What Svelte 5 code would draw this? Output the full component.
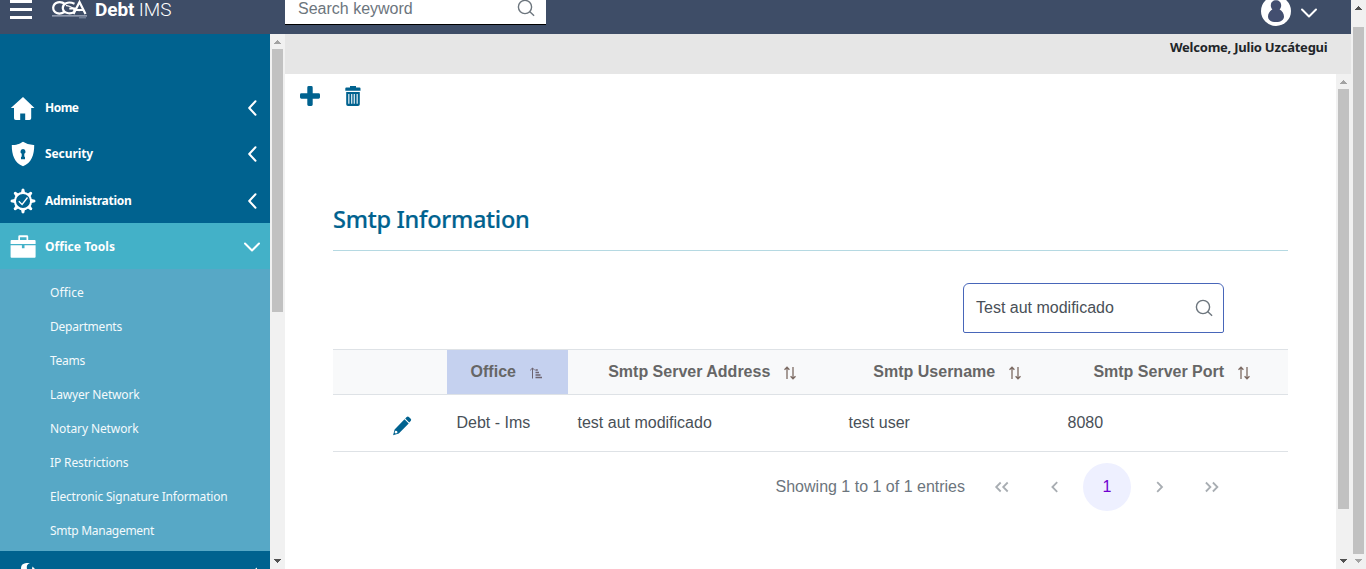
<script>
  const sections = [
    { label: 'Home', icon: 'home', width: 33.5 },
    { label: 'Security', icon: 'shield', width: 48 },
    { label: 'Administration', icon: 'gear', width: 86.5 },
    { label: 'Office Tools', icon: 'case', width: 70, open: true }
  ];
  const tools = [
    ['Office', 34], ['Departments', 72], ['Teams', 35], ['Lawyer Network', 89.5],
    ['Notary Network', 88.5], ['IP Restrictions', 78.5],
    ['Electronic Signature Information', 177.5], ['Smtp Management', 104]
  ];
  const columns = ['Smtp Server Address', 'Smtp Username', 'Smtp Server Port'];
  const teeth = [0, 45, 90, 135, 180, 225, 270, 315];

  // Tracks a label so that it fills the given width.
  function track(node, width) {
    const natural = node.getBoundingClientRect().width;
    node.style.letterSpacing = (width - natural) / node.textContent.length + 'px';
  }
</script>

{#snippet chevron(down)}
  {#if down}
    <svg class="chev" width="18" height="12" viewBox="0 0 18 12"><path d="M2 2.5 9 9.5 16 2.5" /></svg>
  {:else}
    <svg class="chev" width="12" height="18" viewBox="0 0 12 18"><path d="M9.500 2.300 3.200 9 9.500 15.700" /></svg>
  {/if}
{/snippet}

{#snippet magnifier()}
  <svg width="18" height="18" viewBox="0 0 18 18" fill="none" stroke="#6c757d" stroke-width="1.4"><circle cx="8" cy="8" r="6.6" /><path d="m12.6 12.6 4.5 4.2" /></svg>
{/snippet}

{#snippet bar(kind, upOn, downOn)}
  <div class="bar {kind}">
    <svg class="arrow" width="15" height="15" viewBox="0 0 15 15" shape-rendering="crispEdges"><path d="M4 10 7.5 6 11 10Z" fill={upOn ? '#505050' : '#a3a3a3'} /></svg>
    <div class="rail"><div class="thumb"></div></div>
    <svg class="arrow" width="15" height="15" viewBox="0 0 15 15" shape-rendering="crispEdges"><path d="M4 5 11 5 7.5 9Z" fill={downOn ? '#505050' : '#a3a3a3'} /></svg>
  </div>
{/snippet}

{#snippet sectionIcon(name)}
  <svg width="26" height="26" viewBox="0 0 26 26" fill="#fff">
    {#if name === 'home'}
      <path d="M13 2 .8 13H4v10.200q0 1.800 1.800 1.800h4.400v-6.500h5v6.500h4.200q1.800 0 1.800-1.800V13h3.300Z" />
    {:else if name === 'shield'}
      <path fill-rule="evenodd" d="M13 .8Q18 4.200 24.200 4C24.300 14 21.500 21.800 13 25.300 4.500 21.800 1.700 14 1.800 4 8 4.200 10 2.500 13 .8ZM13 8a2.600 2.600 0 0 0-1.300 4.800v3h-.7v2.500h4v-2.500h-.7v-3A2.600 2.600 0 0 0 13 8Z" />
    {:else if name === 'gear'}
      {#each teeth as a}<path d="M10.800 5.500 11.700 1.200Q13-.2 14.300 1.200L15.200 5.500Z" transform="rotate({a} 13 13)" />{/each}
      <circle cx="13" cy="13" r="8.100" fill="none" stroke="#fff" stroke-width="2.100" />
      <path d="m8.800 13.200 3.300 3.300 5.400-7" fill="none" stroke="#fff" stroke-width="1.300" />
    {:else}
      <path d="M8.300 6V2.600Q8.300 1.300 9.600 1.300h7.300q1.300 0 1.300 1.300V6h-1.700V3.200H10V6Z" />
      <path d="M1.500 6h23.200q.9 0 .9.9v3.200H.6V6.900q0-.9.900-.9ZM.6 11.200h11.300v3h2.600v-3h11.100v11.500q0 1-.9 1H1.500q-.9 0-.9-1Z" />
    {/if}
  </svg>
{/snippet}

{#snippet sortArrows()}
  <svg class="sort" width="14" height="14" viewBox="0 0 14 14" fill="none" stroke="#7b6a62" stroke-width="1.300"><path d="M4 13V1.300M1.500 3.700 4 1.200 6.400 3.700M10 1v11.700M7.600 10.300 10 12.800 12.500 10.300" /></svg>
{/snippet}

<div class="page">
  <div class="app">
    <header>
      <svg class="burger" width="22" height="20" viewBox="0 0 22 20" fill="#fff"><path d="M0 0h22v3H0zM0 8h22v3H0zM0 16h22v3H0z" /></svg>
      <svg class="logo" width="36" height="20" viewBox="0 0 36 20" fill="none" stroke="#fff" stroke-width="2.200">
        <path d="M13 4C9 1.100 2 1.500 1.200 7.500 1 13 7 15.300 12.500 12M22.500 3.700C16 .9 10.500 3.500 10.800 8.300c.8 5.200 7.500 6.200 11.500 3.500V8.500h-5M21.500 14 27.500 2 33.500 14M24 10H32" />
        <path d="M14 5.700c5-.8 8.500 5.300 13.500 4.800" stroke-width="1.300" />
        <path d="M0 15.900h35" stroke="#aab2c3" stroke-width="1.300" /><path d="M27 17.800h7" stroke="#8490a8" stroke-width="1" />
      </svg>
      <div class="brand"><b>Debt</b> IMS</div>
      <div class="search keyword"><span>Search keyword</span>{@render magnifier()}</div>
      <div class="account">
        <svg width="30" height="34" viewBox="0 0 30 34"><circle cx="15" cy="11" r="15" fill="#fff" /><path d="M15 .2c3 0 5.200 2 5.200 5 0 2-.8 3.300-1.600 4.300 2.700 1.500 4.400 4.100 4.400 7 0 3.500-3 5.500-8 5.500s-8-2-8-5.500c0-2.900 1.700-5.500 4.400-7-.8-1-1.600-2.300-1.600-4.300 0-3 2.200-5 5.200-5Z" fill="#434f70" /></svg>
        {@render chevron(true)}
      </div>
    </header>

    <div class="body">
      <nav>
        {#each sections as s}
          <div class="section" class:open={s.open}>
            {@render sectionIcon(s.icon)}
            <span class="label"><span use:track={s.width}>{s.label}</span></span>
            {@render chevron(s.open)}
          </div>
        {/each}
        <div class="sub">
          {#each tools as [label, width]}
            <div class="item"><span use:track={width}>{label}</span></div>
          {/each}
        </div>
        <div class="next">
          <svg width="20" height="18" viewBox="0 0 20 18" fill="#fff"><path d="M3 18C3 13 5.500 11.800 12 12 9 13.200 8.500 15 9 18ZM14.500 15.500l2.500 2.500h-3Z" /></svg>
          <svg width="4" height="18" viewBox="0 0 4 18"><path d="m1 18 2-1.500V18Z" fill="#fff" /></svg>
        </div>
      </nav>
      {@render bar('side', false, true)}

      <section class="content">
        <div class="welcome"><span use:track={157.5}>Welcome, Julio Uzcátegui</span></div>
        <div class="pane">
          <main>
            <div class="actions">
              <svg width="20" height="20" viewBox="0 0 20 20" fill="#00628f"><path d="M8.700 0h2.600q1.400 0 1.400 1.400v5.900h5.900Q20 7.300 20 8.700v2.600q0 1.400-1.400 1.400h-5.900v5.900q0 1.400-1.400 1.400H8.700q-1.400 0-1.400-1.400v-5.900H1.400Q0 12.700 0 11.300V8.700q0-1.400 1.400-1.400h5.900V1.400Q7.300 0 8.700 0Z" /></svg>
              <svg width="16" height="20" viewBox="0 0 16 20"><path fill="#00628f" fill-rule="evenodd" d="M5 0h6v1.500h3.500q1 0 1 1V4.700H.3V2.500q0-1 1-1H5ZM1.200 6h13.600v12.200q0 1.800-1.800 1.800H3q-1.800 0-1.800-1.800ZM3.300 8v9.800h1.100V8Zm2.900 0v9.800h1.100V8Zm2.500 0v9.800h1.100V8Zm2.900 0v9.800h1.100V8Z" /></svg>
            </div>
            <div class="card">
              <h1><span use:track={196.5}>Smtp Information</span></h1>
              <div class="search filter"><span>Test aut modificado</span>{@render magnifier()}</div>
              <div class="table">
                <div class="tr head">
                  <div></div>
                  <div class="sorted">Office
                    <svg class="sort" width="14" height="14" viewBox="0 0 14 14" fill="none" stroke="#6d6470"><path d="M3.500 12.500V2M1.200 4.300 3.500 2l2.300 2.300" /><path stroke-width="1.500" d="M6.500 4h2.300M6.500 6.500h3.500M6.500 9h5M6.500 11.500H13" /></svg>
                  </div>
                  {#each columns as c}<div>{c}{@render sortArrows()}</div>{/each}
                </div>
                <div class="tr row">
                  <div class="edit"><svg width="20" height="20" viewBox="0 0 20 20" fill="#00628f"><path d="M13.200 2.500 14.700 1q1.100-1 2.200 0l1.800 1.800q1 1 0 2.100l-1.500 1.500ZM12.500 3.200l4.200 4.200-9.900 10-5.700 1.900 1.500-5.900Z" /><path d="m3.200 14.800 1.900.2.300 1.900-1.900.6-.9-.9Z" fill="#fff" /></svg></div>
                  <div>Debt - Ims</div><div>test aut modificado</div><div>test user</div><div>8080</div>
                </div>
              </div>
              <div class="pager">
                <span class="count">Showing 1 to 1 of 1 entries</span>
                <svg width="48" height="48" viewBox="0 0 48 48"><path d="m22.700 19.500-4.500 4.500 4.500 4.500m7-9-4.500 4.500 4.500 4.500" /></svg>
                <svg width="48" height="48" viewBox="0 0 48 48"><path d="M26.200 19.200 21.400 24l4.800 4.800" /></svg>
                <span class="current">1</span>
                <svg width="48" height="48" viewBox="0 0 48 48"><path d="m21.200 19.200 4.800 4.800-4.800 4.800" /></svg>
                <svg width="48" height="48" viewBox="0 0 48 48"><path d="m17.900 19.500 4.500 4.500-4.500 4.500m7-9 4.500 4.500-4.500 4.500" /></svg>
              </div>
            </div>
          </main>
          {@render bar('inner', false, true)}
        </div>
      </section>
    </div>
  </div>
  {@render bar('outer', true, false)}
</div>

<style>
  :global(body) { margin: 0; overflow: hidden; }
  .page { display: flex; width: 1366px; height: 569px; overflow: hidden; background: #fff; font: 16px "Liberation Sans", Arial, sans-serif; color: #495057; }
  .page :global(svg) { display: block; flex: none; }
  .app { width: 1351px; display: flex; flex-direction: column; }
  header { height: 34px; background: #3e4d67; display: flex; align-items: flex-start; overflow: hidden; }
  .burger { margin-left: 10px; }
  .logo { margin-left: 20px; }
  .brand { width: 190px; margin-left: 7px; color: #fff; font: 300 19px/20px Roboto, sans-serif; letter-spacing: -0.100px; white-space: nowrap; }
  .brand b { font-weight: 700; }
  .search { box-sizing: border-box; width: 261px; display: flex; align-items: center; justify-content: space-between; }
  .keyword { height: 50px; margin-top: -25px; padding: 18px 11px 0 13px; background: #fff; border-bottom: 1px solid #000; color: #6c757d; }
  .keyword :global(svg) { margin-top: -2px; }
  .account { margin-left: auto; margin-right: 33px; display: flex; gap: 9px; }
  .account .chev { margin-top: 7px; }
  .chev { fill: none; stroke: #fff; stroke-width: 2; stroke-linecap: round; stroke-linejoin: round; }
  .body { display: flex; height: 535px; }
  nav { box-sizing: border-box; width: 270px; padding-top: 50px; background: #00628f; color: #fff; font: 12px "Noto Sans", sans-serif; overflow: hidden; }
  .section { box-sizing: border-box; height: 46.333px; display: flex; align-items: center; padding: 2px 12px 0 9.500px; font-weight: 700; }
  .section.open { height: 46px; background: #43b1c8; padding-right: 9px; }
  .label { flex: 1; margin-left: 9.500px; margin-top: -1px; }
  .label span, .item span, .welcome span, h1 span { display: inline-block; white-space: nowrap; }
  .sub { height: 282px; box-sizing: border-box; padding: 7px 0 0 50px; background: #57a8c6; }
  .item { height: 34px; line-height: 34px; color: #f4fafc; }
  .next { height: 18px; display: flex; justify-content: space-between; padding: 0 12px 0 18px; }
  .bar { width: 15px; background: #f1f1f1; display: flex; flex-direction: column; flex: none; }
  .rail { flex: 1; padding: 0 2px; }
  .thumb { background: #c1c1c1; }
  .side .thumb { height: 263px; }
  .inner .thumb { height: 420px; }
  .outer .thumb { height: 527px; margin-top: 12px; }
  .content { width: 1066px; }
  .welcome { height: 40px; box-sizing: border-box; padding: 4px 23.500px 0 0; background: #e6e6e6; color: #212529; text-align: right; font: 700 13px/19px "Noto Sans", sans-serif; }
  .pane { display: flex; height: 495px; }
  main { width: 1051px; }
  .actions { display: flex; gap: 24.500px; padding: 12px 0 0 15px; }
  .card { width: 955px; margin: 97px 0 0 48px; }
  h1 { margin: 0; height: 47px; border-bottom: 1px solid #b5d9e2; color: #00628f; font: 500 23.500px/32px "Noto Sans", sans-serif; -webkit-text-stroke: 0.200px #00628f; }
  .filter { height: 50px; margin: 32px 0 0 630px; padding: 0 10px 0 12px; border: 1px solid #4866b9; border-radius: 6px 6px 2px 2px; }
  .table { margin-top: 16px; }
  .tr { display: grid; grid-template-columns: 114px 121px 271px 219px 230px; box-sizing: border-box; border-bottom: 1px solid #dee2e6; }
  .head { height: 46px; border-top: 1px solid #dee2e6; background: #f8f9fa; font-weight: 700; color: #666; }
  .head > div { display: flex; align-items: center; justify-content: center; padding-right: 1.500px; }
  .head > .sorted { background: #c5d1ef; }
  .sort { margin: 2px 0 0 13px; }
  .row { height: 57px; align-items: center; }
  .row > div { padding-left: 9.500px; }
  .row > .edit { padding: 5px 0 0 59px; }
  .pager { display: flex; align-items: center; justify-content: flex-end; gap: 4.500px; height: 48px; margin-top: 11px; padding-right: 52px; color: #6c757d; }
  .count { margin-right: 8.500px; }
  .pager svg { fill: none; stroke: #a8adb2; stroke-width: 1.800; }
  .current { width: 48px; height: 48px; line-height: 48px; text-align: center; border-radius: 50%; background: #eef0ff; color: #7000d0; }
</style>
